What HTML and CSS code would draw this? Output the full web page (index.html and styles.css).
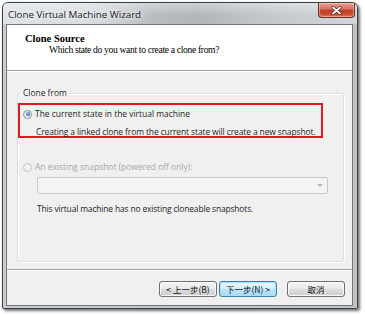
FILE: index.html
```html
<!DOCTYPE html>
<html>
<head>
<meta charset="utf-8">
<link rel="stylesheet" href="styles.css">
</head>
<body>
<div class="window">
  <div class="titlebar">
    <span class="title">Clone Virtual Machine Wizard</span>
    <span class="close"><svg width="11" height="9" viewBox="0 0 11 9"><path d="M2 1.5 L9 7.5 M9 1.5 L2 7.5" stroke="#4a3030" stroke-width="3.2" stroke-linecap="round"/><path d="M2 1.5 L9 7.5 M9 1.5 L2 7.5" stroke="#fff" stroke-width="1.7" stroke-linecap="round"/></svg></span>
  </div>
  <div class="client">
    <div class="header">
      <div class="h-title">Clone Source</div>
      <div class="h-sub">Which state do you want to create a clone from?</div>
    </div>
    <div class="content">
      <fieldset class="group">
        <legend>Clone from</legend>
        <div class="highlight">
          <div class="opt">
            <span class="radio checked"></span>
            <span>The current state in the virtual machine</span>
          </div>
          <div class="note">Creating a linked clone from the current state will create a new snapshot.</div>
        </div>
        <div class="opt disabled">
          <span class="radio"></span>
          <span>An existing snapshot (powered off only):</span>
        </div>
        <div class="combo"><span class="arrow"></span></div>
        <div class="note2">This virtual machine has no existing cloneable snapshots.</div>
      </fieldset>
    </div>
    <div class="footer">
      <button class="btn">&lt; 上一步(B)</button>
      <button class="btn default">下一步(N) &gt;</button>
      <button class="btn cancel">取消</button>
    </div>
  </div>
</div>
</body>
</html>
```
FILE: styles.css
```css
html, body {
  margin: 0;
  padding: 0;
  background: #ffffff;
}
body {
  width: 365px;
  height: 315px;
  overflow: hidden;
}
.window {
  box-sizing: border-box;
  margin: 2px 0 0 2px;
  width: 356px;
  height: 307px;
  border: 1px solid #3e4246;
  border-radius: 6px 6px 2px 2px;
  padding: 0 4px 2px 3px;
  display: flex;
  flex-direction: column;
  background: linear-gradient(to right, #c9cdd2 0%, #c3c7cc 50%, #bfc3c8 100%);
  box-shadow: 2px 2px 3px rgba(0, 0, 0, 0.55), 0 0 1px rgba(0,0,0,0.4);
}
.titlebar {
  height: 21px;
  display: flex;
  align-items: flex-start;
  justify-content: space-between;
  margin: 0 -4px 0 -3px;
  padding: 0 4px 0 3px;
  border-radius: 5px 5px 0 0;
  background:
    linear-gradient(to bottom, rgba(255,255,255,0.35) 0%, rgba(255,255,255,0) 60%),
    linear-gradient(to right, #dfe3e8 0%, #d8dce1 25%, #b9bdc2 42%, #b2b6bb 55%, #c4c8cd 75%, #d2d6db 100%);
}
.title {
  font-family: "Open Sans", "Noto Sans", sans-serif;
  font-size: 9.8px;
  color: #1a1a1a;
  margin: 6px 0 0 2px;
  line-height: 12px;
  letter-spacing: -0.03px;
  text-shadow: 0 0 6px #fff, 0 0 4px #fff;
}
.close {
  width: 37px;
  height: 15px;
  margin-top: 0;
  margin-right: -2px;
  box-sizing: border-box;
  border: 1px solid #6b2a22;
  border-top: none;
  border-radius: 0 0 4px 4px;
  background: linear-gradient(to bottom, #e6a497 0%, #d77564 40%, #c23d26 55%, #cd4a31 80%, #dd7a5c 100%);
  display: flex;
  align-items: center;
  justify-content: center;
  box-shadow: inset 0 0 0 1px rgba(255,220,210,0.45);
}
.close svg { display: block; }
.client {
  flex: 1;
  border: 1px solid #6f757c;
  background: #f0f0f0;
  display: flex;
  flex-direction: column;
}
.header {
  height: 46px;
  background: #ffffff;
  border-bottom: 1px solid #a0a0a0;
  box-sizing: border-box;
  padding: 8px 0 0 18px;
  font-family: "Liberation Serif", "Times New Roman", serif;
  color: #000;
}
.h-title {
  font-weight: bold;
  font-size: 10.5px;
  line-height: 11px;
}
.h-sub {
  font-size: 9.6px;
  line-height: 12px;
  margin-left: 24px;
  letter-spacing: -0.33px;
}
.content {
  flex: 1;
  border-top: 1px solid #ffffff;
  padding: 16px 8px 0 10px;
  font-family: "Open Sans", "Noto Sans", sans-serif;
  font-size: 8.45px;
  color: #1e1e1e;
}
.group {
  margin: 0;
  box-sizing: border-box;
  height: 174px;
  border: 1px solid #d5dfe5;
  border-radius: 3px;
  padding: 5px 0 0 0;
  box-shadow: inset 1px 1px 0 #fff, 1px 1px 0 #fff;
}
.group legend {
  padding: 0 2px;
  margin-left: 3px;
  line-height: 10px;
  color: #1e1e1e;
}
.highlight {
  margin-left: 0;
  width: 305px;
  border: 2px solid #e8161f;
  height: 35px;
  box-sizing: border-box;
  padding: 4px 0 0 3px;
}
.opt {
  display: flex;
  align-items: center;
  height: 10px;
  line-height: 10px;
  white-space: nowrap;
}
.radio {
  width: 9px;
  height: 9px;
  box-sizing: border-box;
  border-radius: 50%;
  border: 1px solid #8d9397;
  background: radial-gradient(circle, #f4f4f4 0, #dcdcdc 100%);
  margin-right: 3px;
  position: relative;
  flex: none;
}
.radio.checked::after {
  content: "";
  position: absolute;
  left: 1.5px;
  top: 1.5px;
  width: 4px;
  height: 4px;
  border-radius: 50%;
  background: radial-gradient(circle at 40% 35%, #8ad0f0 0, #2a6aa0 70%, #1d4f80 100%);
}
.note {
  margin: 8px 0 0 13px;
  line-height: 10px;
  white-space: nowrap;
  letter-spacing: -0.1px;
}
.opt.disabled {
  margin: 24px 0 0 5px;
  color: #a7a7a7;
}
.opt.disabled .radio {
  border-color: #c4c6c8;
  background: #f2f2f2;
}
.combo {
  margin: 5px 0 0 19px;
  width: 291px;
  height: 17px;
  box-sizing: border-box;
  border: 1px solid #c5c9cc;
  border-radius: 2px;
  background: #f4f4f4;
  position: relative;
}
.arrow {
  position: absolute;
  right: 4px;
  top: 6px;
  width: 0;
  height: 0;
  border-left: 3px solid transparent;
  border-right: 3px solid transparent;
  border-top: 3px solid #b8b8b8;
}
.note2 {
  margin: 10px 0 0 19px;
  line-height: 10px;
  white-space: nowrap;
  letter-spacing: -0.15px;
}
.footer {
  height: 36px;
  border-top: 1px solid #a0a0a0;
  box-shadow: inset 0 1px 0 #ffffff;
  box-sizing: border-box;
  display: flex;
  align-items: flex-start;
  padding: 11px 0 0 152px;
  gap: 2px;
}
.btn {
  width: 58px;
  height: 16px;
  padding: 0;
  box-sizing: border-box;
  border: 1px solid #707070;
  border-radius: 3px;
  background: linear-gradient(to bottom, #f2f2f2 0%, #ebebeb 45%, #dddddd 50%, #cfcfcf 100%);
  box-shadow: inset 0 0 0 1px rgba(255,255,255,0.8);
  font-family: "Noto Sans CJK TC", "Noto Sans", sans-serif;
  font-size: 8.5px;
  line-height: 14px;
  color: #111;
}
.btn.default {
  border-color: #3c7fb1;
  box-shadow: inset 0 0 0 1px #a8e0f8;
  background: linear-gradient(to bottom, #eaf6fd 0%, #d9f0fc 45%, #bee6fd 50%, #a7d9f5 100%);
}
.btn.cancel {
  margin-left: 8px;
}
```
